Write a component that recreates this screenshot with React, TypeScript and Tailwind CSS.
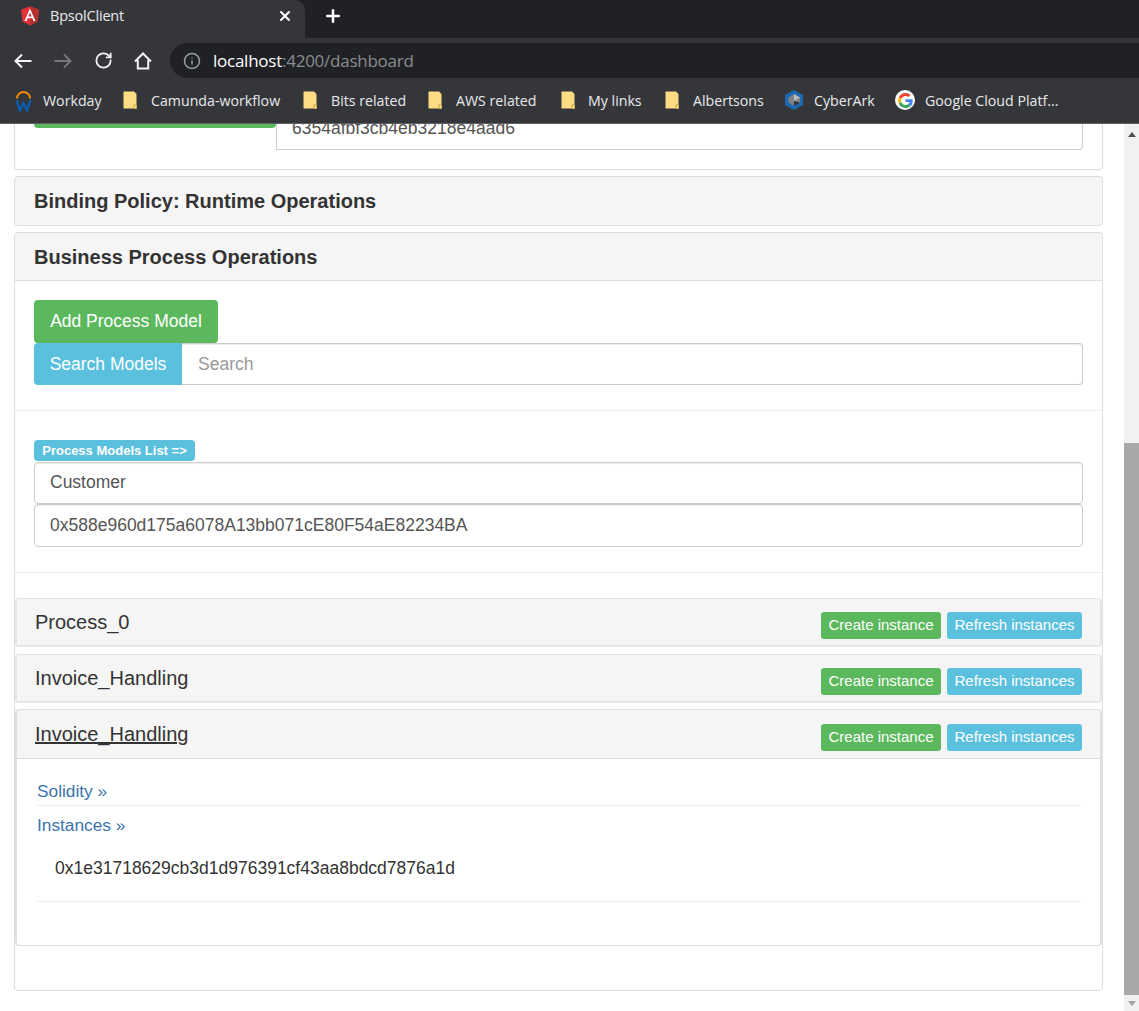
import React from "react";
import { RotateCw, Info, X, Plus } from "lucide-react";

const Folder = () => (
  <svg width="14" height="18" viewBox="0 0 14 18" className="shrink-0">
    <path d="M0.5 1 Q0.5 0.5 1 0.5 H11 L13.5 3 V17.5 H1 Q0.5 17.500 0.5 17 Z" fill="#fddc85" />
    <path d="M10.500 17.5 V13.500 H13.5 V17.5 Z" fill="#c9a53f" />
    <path d="M11.5 17.5 V14.500 H13.5 V17.5 Z" fill="#fddc85" />
  </svg>
);

const AngularLogo = () => (
  <svg width="18" height="20" viewBox="31 30 188 200" className="shrink-0">
    <path d="M125 30L31.900 63.200l14.200 123.100L125 230l78.900-43.700 14.200-123.100z" fill="#e23237" />
    <path d="M125 30v200l78.900-43.700 14.200-123.100L125 30z" fill="#b52e31" />
    <path d="M125 52.100L66.800 182.600h21.700l11.700-29.200h49.400l11.700 29.200H182L125 52.100zm17 83.300h-34l17-40.900 17 40.900z" fill="#fff" />
  </svg>
);

const BackIcon = ({ flip }: { flip?: boolean }) => (
  <svg width="18" height="16" viewBox="0 0 18 16" fill="none" stroke="currentColor" strokeWidth="2" className={flip ? "-scale-x-100" : ""}>
    <path d="M8 1.500 L1.500 8 L8 14.500 M1.500 8 H17.500" />
  </svg>
);

const HomeIcon = () => (
  <svg width="18" height="18" viewBox="0 0 18 18" fill="none" stroke="currentColor" strokeWidth="2" className="text-[#f1f3f4]">
    <path d="M1 9.500 L9 1.500 L17 9.500 M3.800 8 V16.500 H14.200 V8" />
  </svg>
);

const WorkdayLogo = () => (
  <svg width="17" height="22" viewBox="0 0 17 22" className="shrink-0">
    <path d="M2 8.500 A6.500 6.500 0 0 1 15 8.500" fill="none" stroke="#f38b00" strokeWidth="2" />
    <path d="M1.500 10 L5 20.500 L8.500 13 L12 20.500 L15.500 10" fill="none" stroke="#0a5cb0" strokeWidth="2.400" />
  </svg>
);

const CyberArkLogo = () => (
  <svg width="18" height="20" viewBox="0 0 18 20" className="shrink-0">
    <path d="M9 0 L18 5 V15 L9 20 L0 15 V5 Z" fill="#1f66b0" />
    <path d="M9 4 L15 7.500 V12.500 L9 16 L3.500 12.500 V7.500 Z" fill="#7f8387" />
    <path d="M9 4 L15 7.500 L9 11 Z" fill="#b9bcbf" />
    <path d="M9 11 L15 12.500 L9 16 Z" fill="#303438" />
  </svg>
);

const GoogleLogo = () => (
  <span className="flex h-5 w-5 shrink-0 items-center justify-center rounded-full bg-white">
    <svg width="15" height="15" viewBox="0 0 48 48">
      <path fill="#EA4335" d="M24 9.500c3.500 0 6.700 1.200 9.200 3.600l6.900-6.900C35.900 2.400 30.500 0 24 0 14.600 0 6.500 5.400 2.600 13.300l8 6.200C12.400 13.700 17.700 9.500 24 9.500z" />
      <path fill="#4285F4" d="M47 24.500c0-1.600-.1-3.100-.4-4.500H24v9h12.900c-.6 3-2.200 5.500-4.700 7.200l7.700 6c4.500-4.200 7.100-10.300 7.100-17.700z" />
      <path fill="#FBBC05" d="M10.600 28.500c-.5-1.400-.8-2.900-.8-4.500s.3-3.100.8-4.500l-8-6.200C.9 16.500 0 20.100 0 24s.9 7.500 2.600 10.700l8-6.200z" />
      <path fill="#34A853" d="M24 48c6.500 0 11.900-2.100 15.900-5.800l-7.700-6c-2.200 1.400-4.900 2.300-8.200 2.300-6.300 0-11.600-4.200-13.400-10l-8 6.200C6.500 42.600 14.600 48 24 48z" />
    </svg>
  </span>
);

const bookmarks: { label: string; icon: React.ReactNode; cls: string; w: string }[] = [
  { label: "Workday", icon: <WorkdayLogo />, cls: "ml-[15px] gap-[11px]", w: "w-[58px]" },
  { label: "Camunda-workflow", icon: <Folder />, cls: "ml-[22px] gap-[14px]", w: "w-[130px]" },
  { label: "Bits related", icon: <Folder />, cls: "ml-[22px] gap-[14px]", w: "w-[74px]" },
  { label: "AWS related", icon: <Folder />, cls: "ml-[23px] gap-[14px]", w: "w-[81px]" },
  { label: "My links", icon: <Folder />, cls: "ml-[24px] gap-[13px]", w: "w-[54px]" },
  { label: "Albertsons", icon: <Folder />, cls: "ml-[23px] gap-[14px]", w: "w-[70px]" },
  { label: "CyberArk", icon: <CyberArkLogo />, cls: "ml-[22px] gap-[11px]", w: "w-[61px]" },
  { label: "Google Cloud Platf...", icon: <GoogleLogo />, cls: "ml-[20px] gap-[10px]", w: "w-[136px]" },
];

const BrowserChrome = () => (
  <div className="h-[124px] shrink-0 bg-[#35363a] font-['Open_Sans',sans-serif] text-[#e8eaed]">
    <div className="flex h-[38px] bg-[#202124]">
      <div className="flex h-full w-[305px] items-center rounded-tr-[10px] bg-[#35363a] pb-[6px] pl-[21px] pr-[12px]">
        <AngularLogo />
        <span className="ml-[11px] flex-1 text-[14.5px] tracking-[-0.2px]">BpsolClient</span>
        <X size={16} strokeWidth={3} className="text-white" />
      </div>
      <Plus size={20} strokeWidth={3} className="ml-[18px] mt-[6px] text-white" />
    </div>
    <div className="flex h-[40px] items-center border-t-[5px] border-[#35363a]">
      <div className="ml-[14px] text-[#f1f3f4]"><BackIcon /></div>
      <div className="ml-[22px] text-[#75777a]"><BackIcon flip /></div>
      <RotateCw size={19} strokeWidth={2.300} className="ml-[22px] text-[#f1f3f4]" />
      <div className="ml-[21px]"><HomeIcon /></div>
      <div className="ml-[18px] flex h-[35px] flex-1 items-center rounded-l-[18px] bg-[#202124] pl-[13px]">
        <Info size={18} strokeWidth={2} className="text-[#9aa0a6]" />
        <span className="ml-[12px] text-[17px] tracking-[-0.25px]">
          <span className="text-white">localhost</span>
          <span className="text-[#8a8d91]">:4200/dashboard</span>
        </span>
      </div>
    </div>
    <div className="flex h-[46px] items-center border-b border-[#5f6063] text-[14.2px]">
      {bookmarks.map((b) => (
        <div key={b.label} className={`flex items-center ${b.cls}`}>
          {b.icon}
          <span className={`whitespace-nowrap ${b.w}`}>{b.label}</span>
        </div>
      ))}
    </div>
  </div>
);

const Scrollbar = () => (
  <div className="flex w-[15px] shrink-0 flex-col bg-[#f1f1f1]">
    <div className="flex h-[20px] items-center justify-center">
      <div className="h-0 w-0 border-x-[4px] border-b-[5px] border-x-transparent border-b-[#505050]" />
    </div>
    <div className="mt-[299px] h-[552px] bg-[#a8a8a8]" />
    <div className="flex h-[16px] items-center justify-center">
      <div className="h-0 w-0 border-x-[4px] border-t-[5px] border-x-transparent border-t-[#a3a3a3]" />
    </div>
  </div>
);

const ProcessRow = ({ name, underline, open }: { name: string; underline?: boolean; open?: boolean }) => (
  <div className={`flex items-center justify-between bg-[#f5f5f5] pl-[18px] pr-[18px] ${open ? "h-[49px] border-b border-[#dddddd]" : "h-[46px]"}`}>
    <span className={`text-[20px] text-[#333333] ${underline ? "underline" : ""}`}>{name}</span>
    <div className="mt-[6px] flex gap-[6px] text-[15px] text-white">
      <button className="h-[27px] w-[120px] rounded-[3px] bg-[#5cb85c]">Create instance</button>
      <button className="h-[27px] w-[135px] rounded-[3px] bg-[#5bc0de]">Refresh instances</button>
    </div>
  </div>
);

const TextBox = ({ children, h }: { children: React.ReactNode; h: string }) => (
  <div className={`flex items-center rounded-[4px] border border-[#cccccc] px-[15px] text-[17.5px] text-[#555555] shadow-[inset_0_1px_1px_rgba(0,0,0,0.075)] ${h}`}>
    {children}
  </div>
);

const Dashboard = () => (
  <div className="h-full flex-1 overflow-hidden bg-white pl-[14px] pr-[21px] font-['Liberation_Sans',Arial,sans-serif]">
    <div className="-mt-[16px] mb-[6px] h-[62px] rounded-b-[4px] border-x border-b border-[#dddddd] px-[19px]">
      <div className="flex">
        <div className="h-[20px] w-[242px] rounded-b-[4px] bg-[#5cb85c]" />
        <div className="h-[42px] flex-1 rounded-br-[4px] border-x border-b border-[#cccccc] pl-[15px] pt-[9px] text-[17.5px] leading-[22px] text-[#555555]">
          6354afbf3cb4eb3218e4aad6
        </div>
      </div>
    </div>

    <div className="mb-[6px] flex h-[50px] items-center rounded-[4px] border border-[#dddddd] bg-[#f5f5f5] px-[19px]">
      <h3 className="text-[20px] font-bold text-[#333333]">Binding Policy: Runtime Operations</h3>
    </div>

    <div className="h-[759px] rounded-[4px] border border-[#dddddd]">
      <div className="flex h-[48px] items-center rounded-t-[4px] border-b border-[#dddddd] bg-[#f5f5f5] px-[19px]">
        <h3 className="text-[20px] font-bold text-[#333333]">Business Process Operations</h3>
      </div>

      <div className="px-[19px] pt-[19px]">
        <button className="block h-[43px] w-[184px] rounded-[4px] bg-[#5cb85c] text-[17.5px] text-white">Add Process Model</button>
        <div className="flex h-[42px]">
          <div className="flex w-[148px] items-center justify-center rounded-l-[4px] bg-[#5bc0de] text-[17.5px] text-white">Search Models</div>
          <div className="flex flex-1 items-center rounded-r-[4px] border border-l-0 border-[#cccccc] pl-[16px] text-[17.5px] text-[#999999] shadow-[inset_0_1px_1px_rgba(0,0,0,0.075)]">Search</div>
        </div>
      </div>

      <hr className="mt-[25px] border-[#eeeeee]" />

      <div className="px-[19px] pt-[29px]">
        <div className="flex h-[21px] w-[161px] items-center justify-center rounded-[4px] bg-[#5bc0de] text-[13px] font-bold text-white">Process Models List =&gt;</div>
        <div className="mt-px"><TextBox h="h-[42px] pb-px">Customer</TextBox></div>
        <TextBox h="h-[43px]">0x588e960d175a6078A13bb071cE80F54aE82234BA</TextBox>
      </div>

      <hr className="mt-[25px] border-[#eeeeee]" />

      <div className="flex flex-col gap-[6px] pt-[25px]">
        <div className="mb-px overflow-hidden rounded-[4px] border-x-2 border-b-2 border-t border-[#e6e6e6]"><ProcessRow name="Process_0" /></div>
        <div className="overflow-hidden rounded-[4px] border-x-2 border-b-2 border-t border-[#e6e6e6]"><ProcessRow name="Invoice_Handling" /></div>
        <div className="h-[237px] overflow-hidden rounded-[4px] border-x-2 border-y border-[#e0e0e0]">
          <ProcessRow name="Invoice_Handling" underline open />
          <div className="pl-[20px] pr-[18px] pt-[20px] text-[#3b74ab]">
            <div className="h-[27px] border-b border-[#eeeeee] text-[17.3px] leading-[24px]">Solidity »</div>
            <div className="mt-[7px] text-[17.3px] leading-[24px]">Instances »</div>
            <div className="h-[65px] border-b border-[#eeeeee] pl-[18px] pt-[19px] text-[17.5px] leading-[24px] text-[#333333]">0x1e31718629cb3d1d976391cf43aa8bdcd7876a1d</div>
          </div>
        </div>
      </div>
    </div>
  </div>
);

export default function App() {
  return (
    <div className="flex h-[1011px] w-[1139px] flex-col overflow-hidden bg-white">
      <BrowserChrome />
      <div className="flex min-h-0 flex-1">
        <Dashboard />
        <Scrollbar />
      </div>
    </div>
  );
}
